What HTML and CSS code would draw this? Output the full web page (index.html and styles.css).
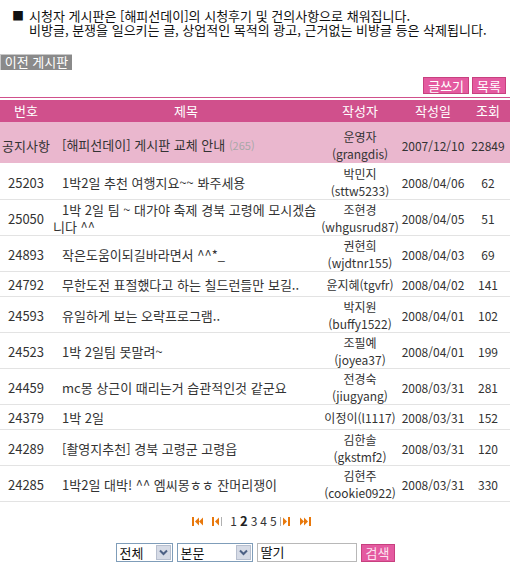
FILE: index.html
```html
<!DOCTYPE html>
<html lang="ko">
<head>
<meta charset="utf-8">
<title>시청자 게시판</title>
<link rel="stylesheet" href="styles.css">
</head>
<body>
<div class="intro">
  <span class="sq">■</span>
  <div class="intro-text">
    <div>시청자 게시판은 [해피선데이]의 시청후기 및 건의사항으로 채워집니다.</div>
    <div>비방글, 분쟁을 일으키는 글, 상업적인 목적의 광고, 근거없는 비방글 등은 삭제됩니다.</div>
  </div>
</div>
<div class="prev-row"><a class="prev-board">이전 게시판</a></div>
<div class="actions">
  <a class="pbtn">글쓰기</a>
  <a class="pbtn">목록</a>
</div>
<div class="board">
<table>
  <colgroup>
    <col class="c-no"><col class="c-title"><col class="c-author"><col class="c-date"><col class="c-hit">
  </colgroup>
  <thead>
    <tr><th>번호</th><th>제목</th><th>작성자</th><th>작성일</th><th>조회</th></tr>
  </thead>
  <tbody>
    <tr class="notice"><td class="no">공지사항</td><td class="title">[해피선데이] 게시판 교체 안내 <span class="cnt">(265)</span></td><td class="author">운영자<br>(grangdis)</td><td class="date">2007/12/10</td><td class="hit">22849</td></tr>
    <tr><td class="no">25203</td><td class="title">1박2일 추천 여행지요~~ 봐주세용</td><td class="author">박민지<br>(sttw5233)</td><td class="date">2008/04/06</td><td class="hit">62</td></tr>
    <tr><td class="no">25050</td><td class="title">1박 2일 팀 ~ 대가야 축제 경북 고령에 모시겠습니다 ^^</td><td class="author">조현경<br>(whgusrud87)</td><td class="date">2008/04/05</td><td class="hit">51</td></tr>
    <tr><td class="no">24893</td><td class="title">작은도움이되길바라면서 ^^*_</td><td class="author">권현희<br>(wjdtnr155)</td><td class="date">2008/04/03</td><td class="hit">69</td></tr>
    <tr><td class="no">24792</td><td class="title">무한도전 표절했다고 하는 칠드런들만 보길..</td><td class="author">윤지혜(tgvfr)</td><td class="date">2008/04/02</td><td class="hit">141</td></tr>
    <tr><td class="no">24593</td><td class="title">유일하게 보는 오락프로그램..</td><td class="author">박지원<br>(buffy1522)</td><td class="date">2008/04/01</td><td class="hit">102</td></tr>
    <tr><td class="no">24523</td><td class="title">1박 2일팀 못말려~</td><td class="author">조필예<br>(joyea37)</td><td class="date">2008/04/01</td><td class="hit">199</td></tr>
    <tr><td class="no">24459</td><td class="title">mc몽 상근이 때리는거 습관적인것 같군요</td><td class="author">전경숙<br>(jiugyang)</td><td class="date">2008/03/31</td><td class="hit">281</td></tr>
    <tr><td class="no">24379</td><td class="title">1박 2일</td><td class="author">이정이(l1117)</td><td class="date">2008/03/31</td><td class="hit">152</td></tr>
    <tr><td class="no">24289</td><td class="title">[촬영지추천] 경북 고령군 고령읍</td><td class="author">김한솔<br>(gkstmf2)</td><td class="date">2008/03/31</td><td class="hit">120</td></tr>
    <tr><td class="no">24285</td><td class="title">1박2일 대박! ^^ 엠씨몽ㅎㅎ 잔머리쟁이</td><td class="author">김현주<br>(cookie0922)</td><td class="date">2008/03/31</td><td class="hit">330</td></tr>
  </tbody>
</table>
</div>
<div class="pager">
  <svg class="pi first" width="11" height="9" viewBox="0 0 11 9"><rect x="0" y="0" width="2" height="9" fill="#e8780c"/><polygon points="7,0.5 7,8.5 3,4.5" fill="#e8780c"/><polygon points="11,0.5 11,8.5 7,4.5" fill="#e8780c"/></svg>
  <svg class="pi prev" width="10" height="9" viewBox="0 0 10 9"><rect x="0" y="0" width="2" height="9" fill="#e8780c"/><polygon points="7,0.5 7,8.5 3,4.5" fill="#e8780c"/><rect x="9" y="0" width="1" height="9" fill="#b0b0b0"/></svg>
  <span class="nums"><a>1</a><a class="cur">2</a><a>3</a><a>4</a><a>5</a></span>
  <svg class="pi next" width="10" height="9" viewBox="0 0 10 9"><rect x="0" y="0" width="1" height="9" fill="#b0b0b0"/><polygon points="3,0.5 3,8.5 7,4.5" fill="#e8780c"/><rect x="8" y="0" width="2" height="9" fill="#e8780c"/></svg>
  <svg class="pi last" width="11" height="9" viewBox="0 0 11 9"><polygon points="0,0.5 0,8.5 4,4.5" fill="#e8780c"/><polygon points="4,0.5 4,8.5 8,4.5" fill="#e8780c"/><rect x="9" y="0" width="2" height="9" fill="#e8780c"/></svg>
</div>
<div class="search">
  <div class="sel s1"><span class="val">전체</span><span class="arr"><svg width="9" height="7" viewBox="0 0 9 7"><path d="M1 1.5 L4.5 5 L8 1.5" fill="none" stroke="#4d6185" stroke-width="2"/></svg></span></div>
  <div class="sel s2"><span class="val">본문</span><span class="arr"><svg width="9" height="7" viewBox="0 0 9 7"><path d="M1 1.5 L4.5 5 L8 1.5" fill="none" stroke="#4d6185" stroke-width="2"/></svg></span></div>
  <div class="kw">딸기</div>
  <a class="sbtn">검색</a>
</div>
</body>
</html>
```
FILE: styles.css
```css
body {
  margin: 0;
  width: 513px;
  font-family: "Noto Sans CJK KR", "Noto Sans", sans-serif;
  font-size: 13px;
  color: #333;
  background: #fff;
}
a { text-decoration: none; }

.intro {
  display: flex;
  padding: 9px 0 0 12px;
  line-height: 14px;
  color: #111;
}
.intro .sq { width: 17px; flex: none; font-size: 12px; }

.prev-row { margin-top: 17px; line-height: 0; }
.prev-board {
  display: inline-block;
  width: 72px;
  height: 16px;
  text-align: center;
  background: #8a8a8a;
  color: #fff;
  box-sizing: border-box;
  border-left: 1px solid #c8c8c8;
  border-top: 1px solid #c8c8c8;
  line-height: 14px;
}

.actions {
  display: flex;
  justify-content: flex-end;
  gap: 3px;
  padding-right: 7px;
  margin-top: 7px;
}
.pbtn {
  display: block;
  height: 17px;
  line-height: 15px;
  padding: 0 4px;
  box-sizing: border-box;
  background: #e45aa0;
  border: 1px solid #c8407f;
  color: #fff;
}

.board {
  width: 510px;
  margin-top: 3px;
  border-top: 1px solid #d0508c;
  padding-top: 2px;
}
table {
  width: 510px;
  border-collapse: separate;
  border-spacing: 0;
  table-layout: fixed;
}
.c-no { width: 52px; }
.c-title { width: 268px; }
.c-author { width: 80px; }
.c-date { width: 66px; }
.c-hit { width: 44px; }

th {
  background: #d0508c;
  color: #fff;
  font-weight: normal;
  height: 22px;
  padding: 0;
  line-height: 22px;
  border-bottom: 3px solid #eab7ce;
}
tbody tr { height: 25px; }
td {
  padding: 1px 0 0;
  line-height: 17px;
  text-align: center;
  border-bottom: 1px solid #e3e3e3;
  color: #333;
  vertical-align: middle;
}
td.title {
  text-align: left;
  padding-left: 1px;
  text-indent: 9px;
}
td.author, td.date, td.hit { font-size: 12px; }
tr.notice td {
  background: #eab7ce;
  border-bottom-color: #fff;
  padding: 3px 0 1px;
}
tr.notice td.title { padding-left: 1px; }
.cnt { color: #a8a8a8; font-size: 11px; }

.pager {
  display: flex;
  justify-content: center;
  align-items: center;
  height: 14px;
  margin-top: 12px;
  padding-right: 10px;
}
.pi { display: block; }
.pi.prev { margin-left: 9px; }
.pi.next { margin-left: 3px; }
.pi.last { margin-left: 10px; }
.nums { display: flex; gap: 3px; font-size: 12px; color: #333; line-height: 14px; margin-left: 8px; }
.nums .cur { font-weight: bold; font-size: 13px; color: #222; }

.search {
  display: flex;
  justify-content: center;
  align-items: center;
  gap: 4px;
  margin-top: 15px;
  width: 510px;
}
.sel {
  display: flex;
  align-items: center;
  justify-content: space-between;
  height: 19px;
  box-sizing: border-box;
  border: 1px solid #7f9db9;
  background: #fff;
  color: #111;
  font-size: 13px;
  padding: 0 1px 0 3px;
}
.s1 { width: 57px; }
.s2 { width: 76px; }
.arr {
  display: flex;
  align-items: center;
  justify-content: center;
  width: 15px;
  height: 15px;
  box-sizing: border-box;
  background: #d6dbe6;
  border: 1px solid #b7bfcf;
}
.kw {
  width: 100px;
  height: 19px;
  box-sizing: border-box;
  border: 1px solid #b8b8b8;
  padding: 0 3px;
  line-height: 15px;
  font-size: 13px;
  color: #111;
}
.sbtn {
  display: block;
  width: 34px;
  height: 18px;
  line-height: 16px;
  box-sizing: border-box;
  text-align: center;
  background: #e45aa0;
  border: 1px solid #c8407f;
  color: #fce4f0;
  font-size: 13px;
}
```
